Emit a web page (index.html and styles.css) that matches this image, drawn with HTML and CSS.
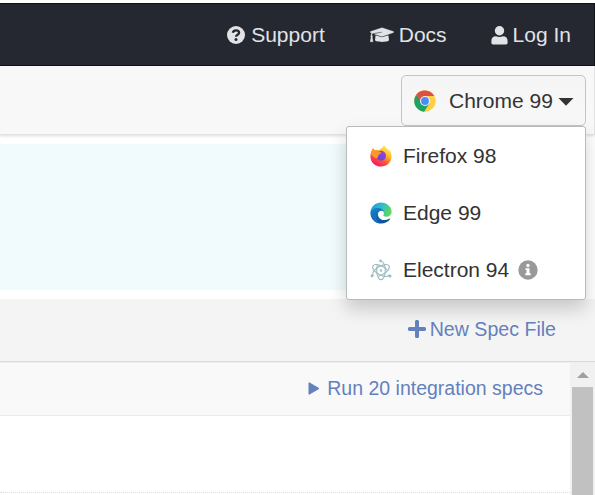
FILE: index.html
```html
<!DOCTYPE html>
<html lang="en">
<head>
<meta charset="utf-8">
<title>Specs</title>
<link rel="stylesheet" href="styles.css">
</head>
<body>
<nav class="navbar">
  <a class="nav-link support"><svg width="18" height="18" viewBox="0 0 18 18"><circle cx="9" cy="9" r="9" fill="#e1e3e6"/><path d="M5.800 6.700C6.300 5 7.400 4.300 9 4.300c1.900 0 3.100 1 3.100 2.500C12.100 8.800 9 8.700 9 10.800" fill="none" stroke="#252831" stroke-width="2.300"/><circle cx="9" cy="13.500" r="1.500" fill="#252831"/></svg><span>Support</span></a>
  <a class="nav-link docs"><svg width="24" height="16" viewBox="0 0 24 16"><path d="M12 .8 23.400 4.600c.6.2.6.8 0 1L12 9.400 4.300 6.900l7.800-1.400-.2-.8-9.200 1.600C2 7 2 7.700 2 8.500c.7.5.7 1.300.2 1.800L3 14.800H.3l.8-4.500C.6 9.800.6 9 1.100 8.500c0-1 .2-1.800.7-2.500L.6 5.600c-.6-.2-.6-.8 0-1z" fill="#e1e3e6" stroke="#e1e3e6" stroke-width=".4"/><path d="m5.600 8.200 6.400 2.100 6.400-2.100.6 4.800c0 2.500-14 2.500-14 0z" fill="#e1e3e6"/></svg><span>Docs</span></a>
  <a class="nav-link login"><svg width="17" height="19" viewBox="0 0 17 19"><circle cx="8.500" cy="4.800" r="4.700" fill="#e1e3e6"/><path d="M5 10.200c2.200 1 4.800 1 7 0 3 0 4.600 2 4.600 4.800v1.800c0 1-.7 1.700-1.700 1.700H2.100c-1 0-1.700-.7-1.700-1.700V15C.4 12.200 2 10.200 5 10.200z" fill="#e1e3e6"/></svg><span>Log In</span></a>
</nav>
<header class="toolbar">
  <div class="browser-picker">
    <button class="browser-button" type="button">
      <svg width="22" height="22" viewBox="0 0 22 22"><circle cx="11" cy="11" r="10.700" fill="#ffcd46"/><path d="M11 11 1.700 5.600A10.700 10.700 0 0 0 10.200 21.700L15.300 13.500z" fill="#1da362"/><path d="M11 11H6.200L1.900 5.300A10.700 10.700 0 0 1 20.300 6H11z" fill="#dd5144"/><circle cx="11" cy="11" r="5" fill="#f2f2f2"/><circle cx="11" cy="11" r="3.900" fill="#4c8bf5"/></svg>
      <span>Chrome 99</span><svg class="caret" width="16" height="8" viewBox="0 0 16 8"><path d="M.5 0h15L8 7.800z" fill="#333"/></svg>
    </button>
    <ul class="browser-menu">
      <li><svg width="22" height="22" viewBox="0 0 22 22"><defs><linearGradient id="ff" x1=".85" y1=".05" x2=".3" y2=".98"><stop offset="0" stop-color="#fff14a"/><stop offset=".35" stop-color="#ffc02b"/><stop offset=".65" stop-color="#ff5b32"/><stop offset="1" stop-color="#f3146b"/></linearGradient><linearGradient id="fp" x1="1" y1="0" x2="0" y2="1"><stop offset="0" stop-color="#a343dc"/><stop offset="1" stop-color="#5b45d5"/></linearGradient></defs><path d="M3 3.300 5 5.600C6.700 4.800 8 5 9 5.600 10 4 11.300 3.200 12.400 3c.2-1.200.8-2.200 1.600-2.800 1 2 3.400 3.200 4.400 5.500l.2-1.400c2.100 2 3 4.600 3 7.300C21.400 17.500 16.800 21.600 11 21.600S.4 17.300.4 11.500C.4 8 1.800 5.500 3 3.300z" fill="url(#ff)"/><path d="M8 6.700c1.500-1.200 4.500-1.500 6.200.2 3 2.500 2.500 8-2.700 8.700-4 .4-6-3.500-4.800-6z" fill="url(#fp)"/><path d="M.8 9C1.300 6.500 2 5 3 3.300L5 5.600C6.700 4.800 8 5 9 5.600l.4 1.600h2.300c-.2 1.300-2.500 1.500-2.900 2.700-1 .7-1.500 2-.9 3.200C5 14 3 11 .8 9z" fill="#ff982a"/></svg><span>Firefox 98</span></li>
      <li><svg width="22" height="22" viewBox="0 0 22 22"><defs><linearGradient id="eg" x1="0" y1=".2" x2="1" y2=".5"><stop offset="0" stop-color="#229bdc"/><stop offset=".5" stop-color="#31bccf"/><stop offset="1" stop-color="#62d957"/></linearGradient><linearGradient id="eb" x1="0" y1="0" x2=".5" y2="1"><stop offset="0" stop-color="#1688d0"/><stop offset="1" stop-color="#124f9d"/></linearGradient></defs><path d="M.4 10C1 4.400 5.500.4 11 .4c6.300 0 10.600 4.600 10.600 9.300 0 3.300-2.600 5.100-5.200 5.100-2.500 0-3.500-1-3-1.700 1-1.100.8-5.500-4.300-5.500C5 7.600 2 8.500.4 10z" fill="url(#eg)"/><path d="M.4 10.500C1.500 7 5.300 5.700 8.800 6c3.200.3 4.800 2.200 5 4-1-1.300-3-1.500-4.500-.6-3 2-.8 8.600 5 8.700 2.300 0 4-.8 5.500-1.600.5-.2.700.2.400.6-2 2.800-5.200 4.500-9.200 4.500C5 21.600.1 16.600.4 10.500z" fill="url(#eb)"/><path d="M7.800 10.800c-3.600 2.600-2.300 8.500 3.200 10.800C5 21.600 1.500 17 3 12.600c.8-2 2.600-2.700 4.800-1.800z" fill="#1475bd"/></svg><span>Edge 99</span></li>
      <li><svg width="22" height="22" viewBox="0 0 22 22" fill="none" stroke="#9bbcc2" stroke-width="1.100"><g stroke-dasharray="38 5"><ellipse cx="11" cy="11.500" rx="9.300" ry="4.300" transform="rotate(30 11 11.500)"/><ellipse cx="11" cy="11.500" rx="9.300" ry="4.300" transform="rotate(-90 11 11.500)"/><ellipse cx="11" cy="11.500" rx="9.300" ry="4.300" transform="rotate(150 11 11.500)"/></g><g stroke="none" fill="#9bbcc2"><circle cx="11" cy="11.500" r="1.200"/><circle cx="10.500" cy="1.900" r="1.300"/><circle cx="2" cy="16.800" r="1.500"/><circle cx="20" cy="17" r="1.500"/></g></svg><span>Electron 94</span><svg class="info" width="20" height="20" viewBox="0 0 20 20"><circle cx="10" cy="10" r="9.700" fill="#999"/><path d="M7.500 8.200h4v5.100h1.200v1.900H7.300v-1.900h1.200v-3.200h-1z" fill="#fff"/><circle cx="10" cy="5.500" r="1.700" fill="#fff"/></svg></li>
    </ul>
  </div>
</header>
<section class="notice-area"><div class="notice"></div></section>
<div class="spec-actions"><a class="new-spec"><svg width="18" height="18" viewBox="0 0 18 18"><path d="M9 1.800v14.400M1.800 9h14.400" stroke="#6480bd" stroke-width="4" stroke-linecap="round"/></svg><span>New Spec File</span></a></div>
<main class="spec-list">
  <div class="spec-content">
    <div class="run-row"><a class="run-all"><svg width="12" height="14" viewBox="0 0 12 14"><path d="M1 1.700v11.600L11 7.500z" fill="#6480bd" stroke="#6480bd" stroke-linejoin="round"/></svg><span>Run 20 integration specs</span></a></div>
    <div class="spec-row"></div>
  </div>
  <div class="scrollbar"><i class="scroll-up"></i><div class="thumb"></div></div>
</main>
</body>
</html>
```
FILE: styles.css
```css
* { box-sizing: border-box; }
body {
  margin: 0;
  padding-top: 3px;
  width: 595px;
  height: 495px;
  overflow: hidden;
  background: #fff;
  color: #333;
  font: 21px/30px "Liberation Sans", Arial, sans-serif;
}
svg { display: block; flex: none; }
span { white-space: nowrap; }
.navbar {
  display: flex;
  justify-content: flex-end;
  gap: 44px;
  height: 63px;
  padding: 1px 23px 0 0;
  background: #252831;
  border: 1px solid #10121a;
  border-left: 0;
  color: #e1e3e6;
}
.nav-link { display: flex; align-items: center; gap: 5px; }
.nav-link.support { gap: 6px; margin-right: 1px; }
.toolbar {
  display: flex;
  justify-content: flex-end;
  height: 69px;
  padding: 9px 8px 0 0;
  background: #f8f8f8;
  border-right: 1px solid #e2e2e2;
  border-bottom: 1px solid #e2e2e2;
  box-shadow: 0 1px 3px rgba(0, 0, 0, .14);
}
.browser-picker { position: relative; width: 185px; height: 51px; }
.browser-button {
  display: flex;
  align-items: center;
  width: 185px;
  height: 51px;
  padding: 0 11px 0 12px;
  background: linear-gradient(#f5f5f5, #f8f8f8);
  border: 1px solid #c4c4c4;
  border-radius: 5px;
  color: #333;
  font: inherit;
}
.browser-button span { margin-left: 13px; }
.caret { margin: 2px 0 0 5px; }
.browser-menu {
  position: absolute;
  z-index: 2;
  top: 51px;
  right: 0;
  width: 240px;
  height: 174px;
  margin: 0;
  padding: 0;
  list-style: none;
  background: #fff;
  border: 1px solid #b7bbbd;
  border-radius: 3px;
  box-shadow: 0 9px 18px rgba(0, 0, 0, .18);
}
.browser-menu li {
  display: flex;
  align-items: center;
  gap: 11px;
  height: 57px;
  padding-left: 23px;
}
.browser-menu .info { margin-left: -2px; }
.notice-area { height: 164px; padding: 9px 9px 9px 0; }
.notice { height: 146px; background: #f1fafd; }
.spec-actions {
  display: flex;
  justify-content: flex-end;
  height: 63px;
  padding-right: 39px;
  background: #f4f4f4;
  border-bottom: 1px solid #d9d9d9;
  color: #6480bd;
  font-size: 19.6px;
}
.new-spec { display: flex; align-items: center; gap: 4px; height: 60px; }
.spec-list { display: flex; height: 133px; border-top: 1px solid #f0f0f0; }
.spec-content { flex: 1; }
.run-row {
  display: flex;
  justify-content: flex-end;
  height: 53px;
  padding-right: 27px;
  background: #f9f9f9;
  border-bottom: 1px solid #ebebeb;
  color: #6480bd;
  font-size: 19.5px;
}
.run-all { display: flex; align-items: center; gap: 7px; height: 50px; }
.spec-row { height: 77px; border-bottom: 1px dotted #ddd; }
.scrollbar {
  display: flex;
  flex-direction: column;
  align-items: center;
  width: 25px;
  padding: 9px 2px 0;
  background: #f1f1f1;
}
.scroll-up { border: 6px solid transparent; border-top: 0; border-bottom-color: #a0a0a0; }
.thumb { width: 21px; height: 120px; margin-top: 9px; background: #c1c1c1; }
```
